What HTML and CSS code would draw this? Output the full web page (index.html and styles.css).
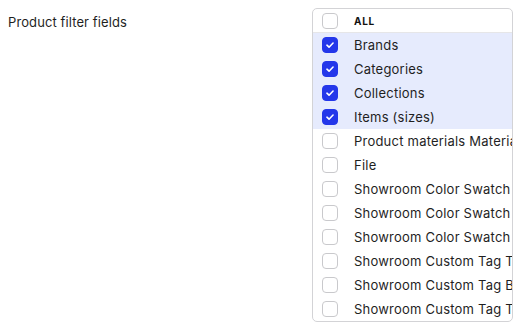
FILE: index.html
```html
<!DOCTYPE html>
<html>
<head>
<meta charset="utf-8">
<link rel="stylesheet" href="styles.css">
</head>
<body>
<div class="field">
  <div class="label">Product filter fields</div>
  <div class="list">
    <div class="row head"><span class="cb"></span><span class="txt all">ALL</span></div>
    <div class="row sel"><span class="cb on"><svg viewBox="0 0 16 16"><path d="M4.5 8.2l2.4 2.3 4.6-4.8"/></svg></span><span class="txt">Brands</span></div>
    <div class="row sel"><span class="cb on"><svg viewBox="0 0 16 16"><path d="M4.5 8.2l2.4 2.3 4.6-4.8"/></svg></span><span class="txt">Categories</span></div>
    <div class="row sel"><span class="cb on"><svg viewBox="0 0 16 16"><path d="M4.5 8.2l2.4 2.3 4.6-4.8"/></svg></span><span class="txt">Collections</span></div>
    <div class="row sel"><span class="cb on"><svg viewBox="0 0 16 16"><path d="M4.5 8.2l2.4 2.3 4.6-4.8"/></svg></span><span class="txt">Items (sizes)</span></div>
    <div class="row"><span class="cb"></span><span class="txt">Product materials Materials</span></div>
    <div class="row"><span class="cb"></span><span class="txt">File</span></div>
    <div class="row"><span class="cb"></span><span class="txt">Showroom Color Swatch Type</span></div>
    <div class="row"><span class="cb"></span><span class="txt">Showroom Color Swatch Base</span></div>
    <div class="row"><span class="cb"></span><span class="txt">Showroom Color Swatch Tone</span></div>
    <div class="row"><span class="cb"></span><span class="txt">Showroom Custom Tag Type</span></div>
    <div class="row"><span class="cb"></span><span class="txt">Showroom Custom Tag Brand</span></div>
    <div class="row"><span class="cb"></span><span class="txt">Showroom Custom Tag Theme</span></div>
  </div>
</div>
</body>
</html>
```
FILE: styles.css
```css
html, body {
  margin: 0;
  padding: 0;
  background: #ffffff;
}
body {
  padding: 8px;
  font-family: Inter, "Noto Sans", sans-serif;
  color: #1c1c1e;
}
.field {
  display: flex;
  align-items: flex-start;
}
.label {
  width: 304px;
  font-size: 13px;
  line-height: 16px;
  padding-top: 6px;
  color: #1f1f1f;
  letter-spacing: 0.1px;
}
.list {
  width: 199px;
  border: 1px solid #d3d3d6;
  border-radius: 5px;
  overflow: hidden;
}
.row {
  display: flex;
  align-items: center;
  height: 24px;
  padding-left: 9px;
  white-space: nowrap;
  overflow: hidden;
}
.row.head {
  height: 23px;
  border-bottom: 1px solid #e6e6e8;
}
.row.sel {
  background: #e6ebfd;
}
.cb {
  flex: none;
  width: 14px;
  height: 14px;
  border: 1px solid #c9c9cc;
  border-radius: 4px;
  background: #fff;
  box-sizing: content-box;
  display: flex;
  align-items: center;
  justify-content: center;
}
.cb.on {
  background: #2437ea;
  border-color: #2437ea;
}
.cb svg {
  width: 16px;
  height: 16px;
  fill: none;
  stroke: #ffffff;
  stroke-width: 1.8;
  stroke-linecap: round;
  stroke-linejoin: round;
}
.txt {
  margin-left: 16px;
  font-size: 13px;
  color: #1f1f1f;
  letter-spacing: 0.22px;
}
.txt.all {
  font-size: 10px;
  font-weight: 700;
  letter-spacing: 0.7px;
  color: #111;
}
```
